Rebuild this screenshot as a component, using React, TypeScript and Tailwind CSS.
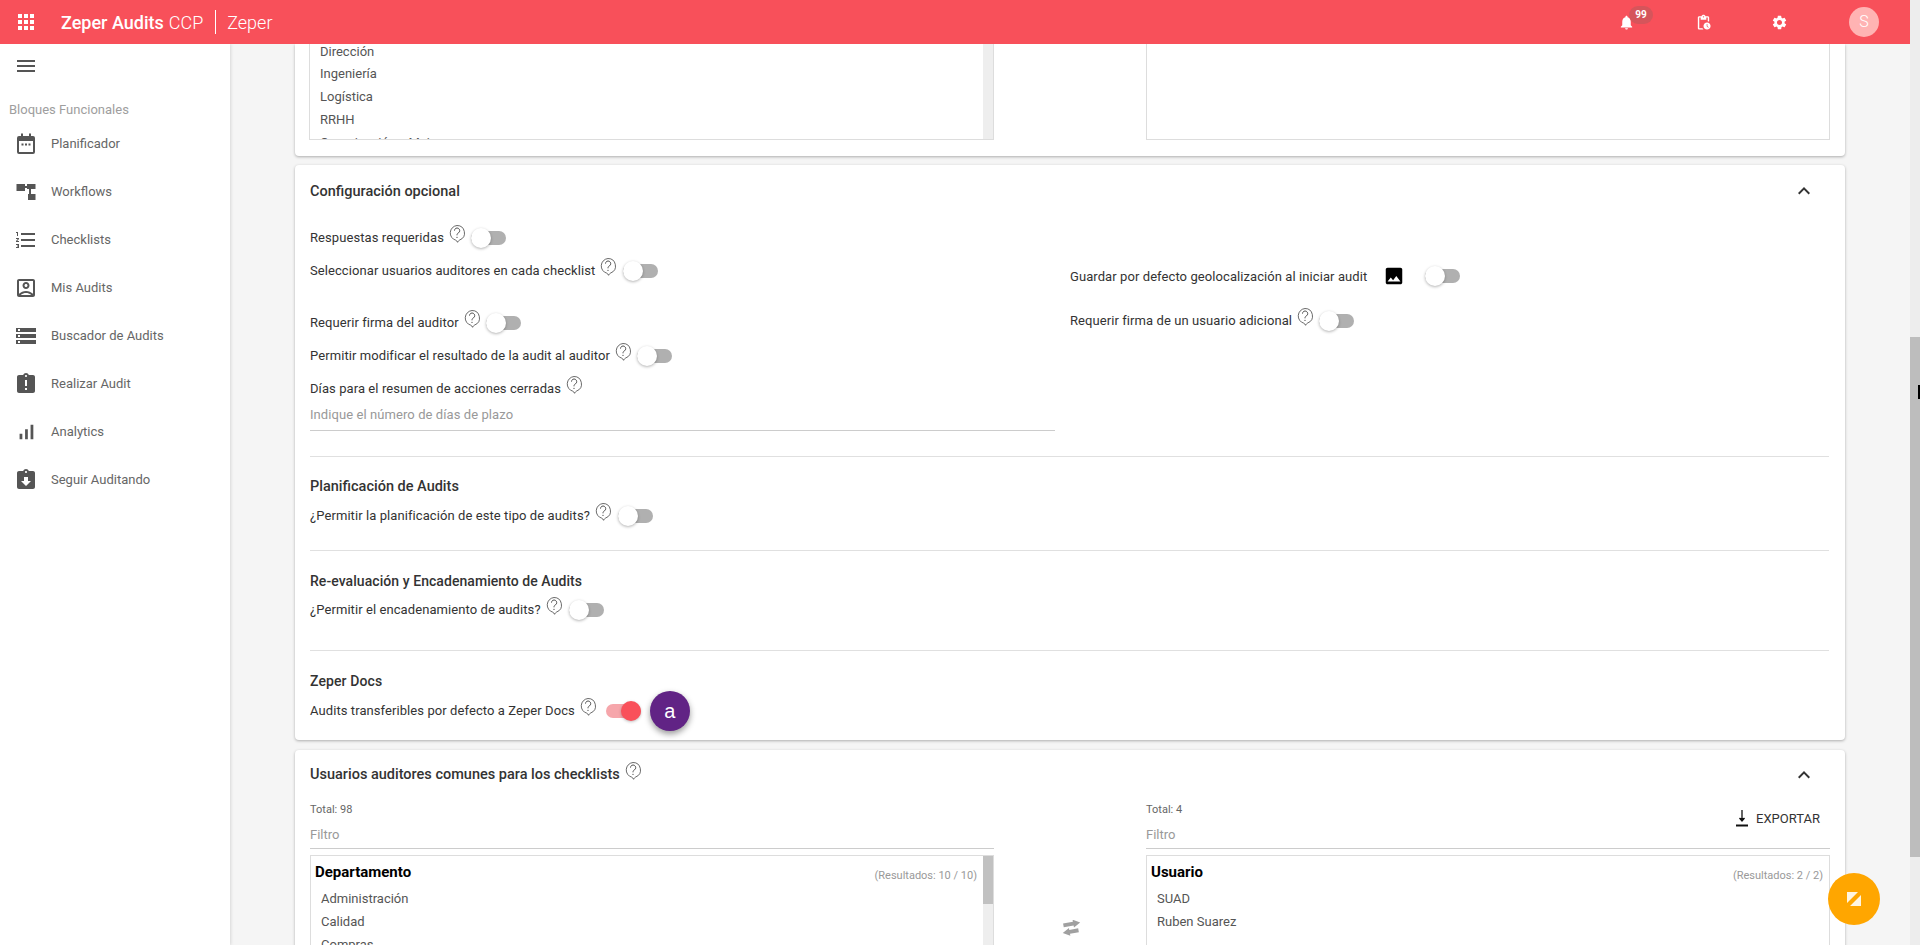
import React from "react";
import {
  MdApps, MdNotifications, MdOutlinePendingActions, MdSettings, MdMenu, MdFormatListNumbered,
  MdOutlineAccountBox, MdStorage, MdAssignmentLate, MdSignalCellularAlt, MdAssignmentReturned, MdImage, MdKeyboardArrowUp,
} from "react-icons/md";

function Help({ className = "" }: { className?: string }) {
  return (
    <svg viewBox="0 0 16 18" className={"w-4 h-[18px] shrink-0 -mt-[8px] " + className} fill="none" stroke="#444" strokeWidth="0.8">
      <path d="M8 0.5a7.5 7.5 0 0 1 2.9 14.4c-.9.4-1.6 1-2.3 2.4-.5-1-1-1.8-1.8-2.1A7.5 7.5 0 0 1 8 .5z" />
      <path d="M5.5 5.6a2.6 2.6 0 1 1 4 2.2c-1 .7-1.5 1.1-1.5 2.5" strokeWidth="0.95" />
      <circle cx="8" cy="12.3" r="0.65" fill="#444" stroke="none" />
    </svg>
  );
}

function Toggle({ on = false, className = "" }: { on?: boolean; className?: string }) {
  return (
    <span className={"relative block w-[35px] h-[14px] rounded-full shrink-0 " + (on ? "bg-[#f6a6ab] " : "bg-[#b0b0b0] ") + className}>
      <span
        className={
          "absolute -top-[3px] w-5 h-5 rounded-full " +
          (on ? "right-0 bg-[#f9505a] shadow-[0_1px_3px_rgba(0,0,0,0.25)]" : "left-0 bg-white shadow-[0_1px_3px_rgba(0,0,0,0.3)]")
        }
      />
    </span>
  );
}

function Row({ label, className = "", gap = "ml-[7px]" }: { label: string; className?: string; gap?: string }) {
  return (
    <div className={"h-[33px] flex items-center text-[13px] tracking-[0.08px] text-[#333] " + className}>
      <span>{label}</span>
      <Help className="ml-[5px]" />
      <Toggle className={gap} />
    </div>
  );
}

function CalendarIcon({ size = 24, className = "" }: { size?: number; className?: string }) {
  return (
    <svg width={size} height={size} viewBox="0 0 24 24" className={className} fill="currentColor">
      <path d="M7 1.5h2V4h6V1.5h2V4h2a2 2 0 0 1 2 2v14a2 2 0 0 1-2 2H5a2 2 0 0 1-2-2V6a2 2 0 0 1 2-2h2zM5 9v11h14V9z" />
      <path d="M7.5 11.5h2v2h-2zM11 11.5h2v2h-2zM14.5 11.5h2v2h-2z" />
    </svg>
  );
}

function WorkflowIcon({ size = 24, className = "" }: { size?: number; className?: string }) {
  return (
    <svg width={size} height={size} viewBox="0 0 24 24" className={className} fill="currentColor">
      <path d="M2.5 4h8.5v7H2.5zM11 6h2v2h-2zM13 4h8.5v5H13zM15 9h2v5h-2zM14 14h7.5v6H14z" />
    </svg>
  );
}

function AnalyticsIcon({ size = 24, className = "" }: { size?: number; className?: string }) {
  return <MdSignalCellularAlt size={size - 2} className={className + " mx-px"} />;
}

const nav = [
  ["Planificador", CalendarIcon],
  ["Workflows", WorkflowIcon],
  ["Checklists", MdFormatListNumbered],
  ["Mis Audits", MdOutlineAccountBox],
  ["Buscador de Audits", MdStorage],
  ["Realizar Audit", MdAssignmentLate],
  ["Analytics", AnalyticsIcon],
  ["Seguir Auditando", MdAssignmentReturned],
] as const;

function ListBox({ title, results, items, scroll = false, className = "" }: { title: string; results: string; items: string[]; scroll?: boolean; className?: string }) {
  return (
    <div className={"relative h-[120px] border border-[#ddd] overflow-hidden " + className}>
      <div className="flex items-center justify-between pl-1 pr-[15px] h-[31px]">
        <span className="text-[15px] font-bold text-black mt-[2px]">{title}</span>
        <span className={"text-[11px] text-[#999] mt-[10px] " + (scroll ? "mr-px" : "mr-[-9px]")}>{results}</span>
      </div>
      {items.map((i) => (
        <div key={i} className="h-[23px] pl-[10px] flex items-center text-[13px] text-[#555]">{i}</div>
      ))}
      {scroll && (
        <div className="absolute right-0 top-0 bottom-0 w-[10px] bg-[#eee]">
          <div className="h-[48px] bg-[#c1c1c1]" />
        </div>
      )}
    </div>
  );
}

export default function App() {
  return (
    <div className="relative w-[1920px] h-[945px] overflow-hidden flex font-['Roboto',sans-serif] bg-[#f5f5f5]">
      <div className="flex-1 min-w-0 flex flex-col">
        <header className="relative z-10 h-11 shrink-0 bg-[#f8505a] text-white flex items-center">
          <MdApps size={24} className="ml-[14px]" />
          <span className="ml-[23px] text-[18px] font-medium">Zeper Audits</span>
          <span className="ml-[5px] text-[18px] font-light">CCP</span>
          <span className="ml-[12px] w-px h-6 bg-white" />
          <span className="ml-[11px] text-[18px] font-light">Zeper</span>
          <div className="flex-1" />
          <span className="relative flex w-[17px] justify-center">
            <MdNotifications size={17} />
            <span className="absolute -top-[8px] left-[11px] w-6 h-[18px] rounded-full bg-[#d5555b] flex items-center justify-center text-[10px] font-bold leading-none">99</span>
          </span>
          <MdOutlinePendingActions size={17} className="ml-[60px]" />
          <MdSettings size={17} className="ml-[59px]" />
          <span className="ml-[61px] mr-[31px] w-[30px] h-[30px] rounded-full bg-[#ffb3b3] flex items-center justify-center text-[16px] font-light">S</span>
        </header>
        <div className="flex-1 min-h-0 flex">
          <aside className="relative z-[5] w-[230px] shrink-0 bg-white shadow-[1px_0_3px_rgba(0,0,0,0.12)]">
            <div className="h-11 flex items-center pl-[14px] text-[#555]"><MdMenu size={24} /></div>
            <div className="mt-3 h-5 pl-[9px] flex items-center text-[13px] text-[#9e9e9e]">Bloques Funcionales</div>
            <nav>
              {nav.map(([label, Icon]) => (
                <div key={label} className="h-12 flex items-center text-[13px] text-[#666]">
                  <span className="ml-[14px] w-6 flex justify-center text-[#555]"><Icon size={24} /></span>
                  <span className="ml-[13px]">{label}</span>
                </div>
              ))}
            </nav>
          </aside>
          <main className="flex-1 min-w-0 overflow-hidden px-[65px]">
            <section className="h-[112px] bg-white rounded-b-[4px] shadow-[0_1px_3px_rgba(0,0,0,0.3)] pl-[14px] pr-[15px] flex justify-between">
              <div className="relative w-[685px] h-[96px] border-x border-b border-[#ddd] overflow-hidden">
                <div className="-mt-[4px]">
                  {["Dirección", "Ingeniería", "Logística", "RRHH", "Organización y Mejora"].map((i) => (
                    <div key={i} className="h-[22.8px] pl-[10px] flex items-center text-[13px] text-[#555]">{i}</div>
                  ))}
                </div>
                <div className="absolute right-0 top-0 bottom-0 w-[10px] bg-[#eee]" />
              </div>
              <div className="w-[684px] h-[96px] border-x border-b border-[#ddd]" />
            </section>

            <section className="mt-[9px] h-[575px] bg-white rounded-[4px] shadow-[0_1px_3px_rgba(0,0,0,0.3)] pl-[15px] pr-4">
              <div className="h-[52px] flex items-center justify-between">
                <span className="text-[14.5px] font-medium text-[#333] mt-px">Configuración opcional</span>
                <MdKeyboardArrowUp size={24} className="mr-[13px] text-[#333]" />
              </div>
              <div className="flex">
                <div className="w-[745px] shrink-0">
                  <Row label="Respuestas requeridas" className="mt-[4px]" gap="ml-[6px]" />
                  <Row label="Seleccionar usuarios auditores en cada checklist" />
                  <Row label="Requerir firma del auditor" className="mt-[19px]" gap="ml-[6px]" />
                  <Row label="Permitir modificar el resultado de la audit al auditor" gap="ml-[6px]" />
                  <div className="h-[33px] flex items-center text-[13px] tracking-[0.08px] text-[#333]">
                    <span>Días para el resumen de acciones cerradas</span>
                    <Help className="ml-[5px]" />
                  </div>
                  <div className="h-[26px] border-b border-[#ccc] text-[13px] tracking-[0.08px] text-[#999]">Indique el número de días de plazo</div>
                </div>
                <div className="ml-[15px] flex-1">
                  <div className="mt-[43px] h-[33px] flex items-center text-[13px] tracking-[0.08px] text-[#333]">
                    <span>Guardar por defecto geolocalización al iniciar audit</span>
                    <MdImage size={22} className="ml-4 text-black -mt-[2px]" />
                    <Toggle className="ml-5 -mt-[2px]" />
                  </div>
                  <Row label="Requerir firma de un usuario adicional" className="mt-[11px]" gap="ml-[6px]" />
                </div>
              </div>
              <div className="mt-[25px] border-t border-[#e0e0e0]" />
              <h3 className="mt-5 h-5 flex items-center text-[14.5px] font-medium text-[#333]">Planificación de Audits</h3>
              <Row label="¿Permitir la planificación de este tipo de audits?" className="mt-[2px]" />
              <div className="mt-[18px] border-t border-[#e0e0e0]" />
              <h3 className="mt-5 h-5 flex items-center text-[14px] tracking-[0.06px] font-medium text-[#333]">Re-evaluación y Encadenamiento de Audits</h3>
              <Row label="¿Permitir el encadenamiento de audits?" className="mt-[2px]" />
              <div className="mt-6 border-t border-[#e0e0e0]" />
              <h3 className="mt-5 h-5 flex items-center text-[14px] tracking-[0.1px] font-medium text-[#333]">Zeper Docs</h3>
              <div className="mt-[3px] h-[33px] flex items-center text-[13px] tracking-[0.08px] text-[#333]">
                <span>Audits transferibles por defecto a Zeper Docs</span>
                <Help className="ml-[5px]" />
                <Toggle on className="ml-[10px]" />
                <span className="ml-[9px] w-10 h-10 rounded-full bg-[#612385] text-white flex items-center justify-center text-[20px] shadow-[0_3px_6px_rgba(0,0,0,0.4)] font-['Liberation_Sans',sans-serif]">a</span>
              </div>
            </section>

            <section className="mt-[10px] h-[300px] bg-white rounded-t-[4px] shadow-[0_1px_3px_rgba(0,0,0,0.3)] pl-[15px] pr-4">
              <div className="h-[50px] flex items-center">
                <span className="text-[14.5px] font-medium text-[#333]">Usuarios auditores comunes para los checklists</span>
                <Help className="ml-[5px]" />
                <div className="flex-1" />
                <MdKeyboardArrowUp size={24} className="mr-[13px] text-[#333]" />
              </div>
              <div className="flex">
                <div className="w-[684px] shrink-0">
                  <div className="h-[20px] flex items-center text-[11px] text-[#666]">Total: 98</div>
                  <div className="h-[29px] pt-[5px] border-b border-[#ccc] text-[13px] text-[#999]">Filtro</div>
                  <ListBox className="mt-[6px]" title="Departamento" results="(Resultados: 10 / 10)" items={["Administración", "Calidad", "Compras"]} scroll />
                </div>
                <div className="w-[152px] shrink-0 flex justify-center">
                  <svg width="21" height="16" viewBox="0 0 21 16" className="mt-[120px] ml-[2px]" fill="#a0a0a0">
                    <g transform="rotate(-10 10.5 8)">
                      <path d="M3 2h10V0l7 4-7 4V6H3z" />
                      <path d="M17 9.5H8v-2l-7 4 7 4v-2h9z" />
                    </g>
                  </svg>
                </div>
                <div className="w-[684px] shrink-0">
                  <div className="relative h-[20px] flex items-center text-[11px] text-[#666]">
                    Total: 4
                    <div className="absolute right-[10px] top-[9px] flex items-center text-[13px] text-[#333]">
                      <svg width="12" height="17" viewBox="0 0 12 17" fill="none" stroke="#111" strokeWidth="1.3"><path d="M6 0v10" /><path d="M3.5 8 6 11l2.5-3" fill="#111" /><path d="M0 15.5h12" strokeWidth="2" /></svg>
                      <span className="ml-2">EXPORTAR</span>
                    </div>
                  </div>
                  <div className="h-[29px] pt-[5px] border-b border-[#ccc] text-[13px] text-[#999]">Filtro</div>
                  <ListBox className="mt-[6px]" title="Usuario" results="(Resultados: 2 / 2)" items={["SUAD", "Ruben Suarez"]} />
                </div>
              </div>
            </section>
          </main>
        </div>
      </div>
      <div className="relative z-20 w-[10px] shrink-0 bg-[#ededed] pt-[337px]">
        <div className="h-[520px] bg-[#bdbdbd]" />
      </div>
      <button className="absolute z-30 right-[40px] bottom-[20px] w-[52px] h-[52px] rounded-full bg-[#ffa600] flex items-center justify-center">
        <svg width="14" height="14" viewBox="0 0 14 14"><path d="M0 0h11L0 11zM14 3v11H3z" fill="#fff5e0" /></svg>
      </button>
      <span className="absolute z-30 right-0 top-[385px] w-[2px] h-[14px] bg-black" />
    </div>
  );
}
